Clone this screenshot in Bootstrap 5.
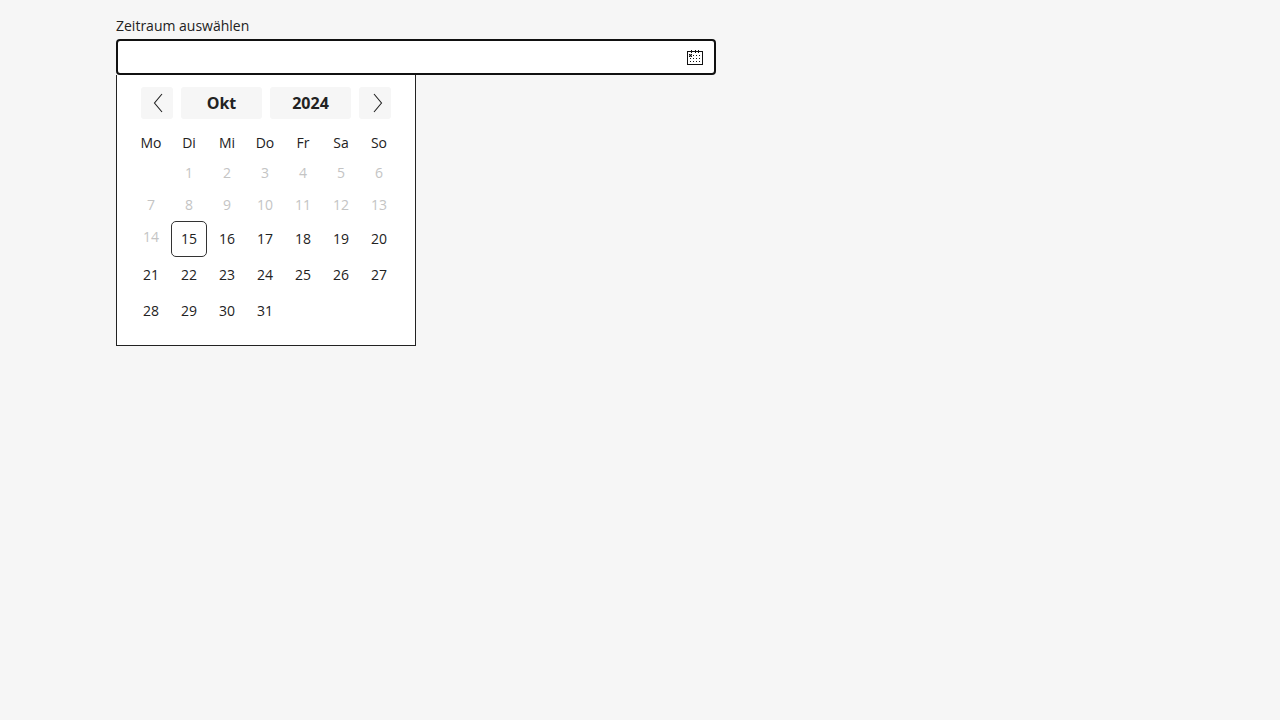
<!DOCTYPE html>
<html lang="de">
<head>
<meta charset="utf-8">
<meta name="viewport" content="width=device-width, initial-scale=1">
<title>Zeitraum auswählen</title>
<link href="https://cdn.jsdelivr.net/npm/bootstrap@5.3.0/dist/css/bootstrap.min.css" rel="stylesheet">
<style>
  body { background: #f6f6f6; color: #222; font: 14px/20px "Open Sans", "Noto Sans", sans-serif; }
  .page { max-width: 1072px; }
  .date-field { max-width: 600px; }
  .date-field label { margin-bottom: 3px; }
  .date-field .form-control, .date-field .form-control:focus {
    height: 36px; border: 2px solid #111; border-radius: 4px; background: #fff; box-shadow: none; font-size: 14px; padding-right: 42px;
  }
  .date-toggle { width: 42px; color: #111; }
  .picker { width: 300px; border: 1px solid #222; border-top: 0; padding: 12px 15px 16px; }
  .picker-nav { padding: 0 9px; }
  .picker-nav button { height: 32px; border: 0; border-radius: 3px; background: #f6f6f6; color: #222; padding: 0; }
  .step { width: 32px; }
  .choice { flex: 1 1 0; font-size: 16px; font-weight: 700; }
  .days { table-layout: fixed; width: 266px; border-collapse: collapse; text-align: center; margin-top: 10px; }
  .days th { font-weight: 400; height: 28px; padding: 0; }
  .days td { padding: 0; vertical-align: top; }
  .days button { display: block; width: 36px; height: 36px; margin: 0 auto; padding: 0; border: 1px solid transparent; border-radius: 5px; background: none; color: #222; }
  .days button:disabled { height: 32px; color: #c4c4c4; }
  .days .today { border-color: #333; }
</style>
</head>
<body>
<main class="page container pt-3">
  <div class="date-field">
    <label for="range" class="d-block">Zeitraum auswählen</label>
    <div class="position-relative">
      <input id="range" type="text" class="form-control" autocomplete="off">
      <button type="button" class="date-toggle btn p-0 border-0 position-absolute top-0 end-0 h-100 d-flex align-items-center justify-content-center" aria-label="Kalender öffnen">
        <svg width="16" height="18" viewBox="0 -2 16 18" fill="currentColor" shape-rendering="crispEdges" aria-hidden="true">
          <path fill-rule="evenodd" d="M0 1h16v14H0zM1 2v12h14V2z"/>
          <path d="M4 0h1v3H4zM8 0h1v3H8zM11 0h1v3h-1z"/>
          <path d="M2 4h3v3H2z" opacity=".55"/>
          <path d="M3 5h1v1H3zM2 4h1v1H2zM4 4h1v1H4zM2 6h1v1H2zM4 6h1v1H4zM6 5h1v1H6zM9 5h1v1H9zM12 5h1v1h-1zM3 8h1v1H3zM6 8h1v1H6zM9 8h1v1H9zM12 8h1v1h-1zM3 11h1v1H3zM6 11h1v1H6zM9 11h1v1H9zM12 11h1v1h-1z"/>
        </svg>
      </button>
    </div>
    <section class="picker bg-white" aria-label="Kalender">
      <div class="picker-nav d-flex gap-2">
        <button type="button" class="step d-flex align-items-center justify-content-center" aria-label="Voriger Monat"><svg width="16" height="20" viewBox="0 0 16 20" fill="none" stroke="currentColor" stroke-width="1.1"><path d="M13 1 5.500 10 13 19"/></svg></button>
        <button type="button" class="choice">Okt</button>
        <button type="button" class="choice">2024</button>
        <button type="button" class="step d-flex align-items-center justify-content-center" aria-label="Nächster Monat"><svg width="16" height="20" viewBox="0 0 16 20" fill="none" stroke="currentColor" stroke-width="1.1"><path d="M7 1 14.500 10 7 19"/></svg></button>
      </div>
      <table class="days">
        <thead><tr><th scope="col">Mo</th><th scope="col">Di</th><th scope="col">Mi</th><th scope="col">Do</th><th scope="col">Fr</th><th scope="col">Sa</th><th scope="col">So</th></tr></thead>
        <tbody>
          <tr><td></td><td><button disabled>1</button></td><td><button disabled>2</button></td><td><button disabled>3</button></td><td><button disabled>4</button></td><td><button disabled>5</button></td><td><button disabled>6</button></td></tr>
          <tr><td><button disabled>7</button></td><td><button disabled>8</button></td><td><button disabled>9</button></td><td><button disabled>10</button></td><td><button disabled>11</button></td><td><button disabled>12</button></td><td><button disabled>13</button></td></tr>
          <tr><td><button disabled>14</button></td><td><button class="today" aria-current="date">15</button></td><td><button>16</button></td><td><button>17</button></td><td><button>18</button></td><td><button>19</button></td><td><button>20</button></td></tr>
          <tr><td><button>21</button></td><td><button>22</button></td><td><button>23</button></td><td><button>24</button></td><td><button>25</button></td><td><button>26</button></td><td><button>27</button></td></tr>
          <tr><td><button>28</button></td><td><button>29</button></td><td><button>30</button></td><td><button>31</button></td><td></td><td></td><td></td></tr>
        </tbody>
      </table>
    </section>
  </div>
</main>
<script src="https://cdn.jsdelivr.net/npm/bootstrap@5.3.0/dist/js/bootstrap.bundle.min.js"></script>
</body>
</html>
